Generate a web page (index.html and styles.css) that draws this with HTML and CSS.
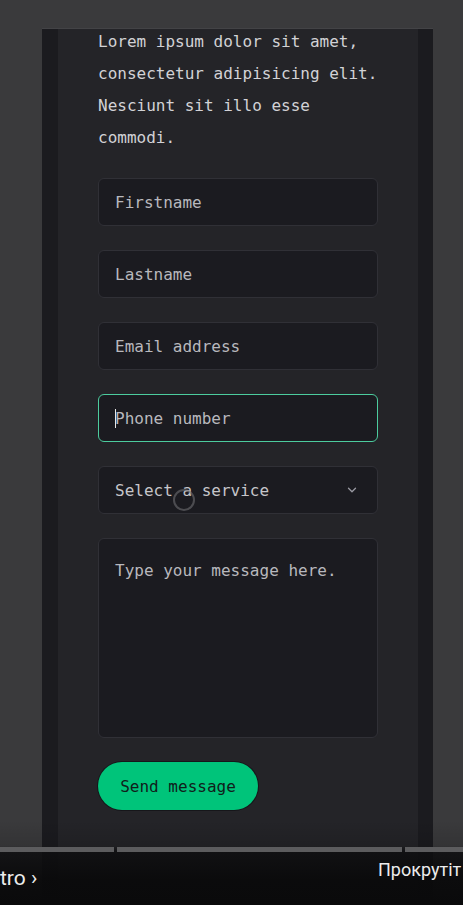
FILE: index.html
```html
<!DOCTYPE html>
<html lang="en">
<head>
<meta charset="utf-8">
<title>Contact form</title>
<link rel="stylesheet" href="styles.css">
</head>
<body>
<div class="stage">
  <div class="device">
    <div class="screen">
      <p class="intro">Lorem ipsum dolor sit amet, consectetur adipisicing elit. Nesciunt sit illo esse commodi.</p>
      <form class="form">
        <div class="field"><span class="ph">Firstname</span></div>
        <div class="field"><span class="ph">Lastname</span></div>
        <div class="field"><span class="ph">Email address</span></div>
        <div class="field is-focused"><span class="caret"></span><span class="ph">Phone number</span></div>
        <div class="field select">
          <span class="ph">Select a service</span>
          <svg class="chevron" width="10" height="6" viewBox="0 0 10 6"><path d="M1.5 1.2l3.5 3.5 3.5-3.5" fill="none" stroke="#9a9aa2" stroke-width="1.3" stroke-linecap="round" stroke-linejoin="round"/></svg>
        </div>
        <div class="field area"><span class="ph">Type your message here.</span></div>
        <div class="btn">Send message</div>
      </form>
    </div>
  </div>
</div>
<div class="spinner"></div>
<div class="player">
  <div class="bar">
    <span class="seg s1"></span>
    <span class="seg s2"></span>
    <span class="seg s3"></span>
  </div>
  <div class="labels">
    <span class="chapter">tro ›</span>
    <span class="hint">Прокрутіт</span>
  </div>
</div>
</body>
</html>
```
FILE: styles.css
```css
html, body {
  margin: 0;
  padding: 0;
}
body {
  width: 463px;
  height: 905px;
  overflow: hidden;
  background: #3a3a3c;
  position: relative;
  font-family: "DejaVu Sans Mono", "Liberation Mono", monospace;
}
.stage {
  padding-top: 29px;
  height: 876px;
}
.device {
  margin-left: 42px;
  width: 391px;
  height: 876px;
  box-sizing: border-box;
  background: #1b1b1f;
  padding: 0 15px 0 16px;
  box-shadow: 0 -1px 0 #434346;
}
.screen {
  background: #242428;
  height: 100%;
  padding: 0 40px;
  overflow: hidden;
}
.intro {
  margin: -3px 0 24px;
  font-size: 16px;
  line-height: 32px;
  color: #d2d2d6;
}
.form {
  display: flex;
  flex-direction: column;
  gap: 24px;
}
.field {
  position: relative;
  height: 48px;
  box-sizing: border-box;
  border: 1px solid #303036;
  border-radius: 6px;
  background: #1b1b20;
  padding: 0 16px;
  display: flex;
  align-items: center;
  font-size: 16px;
  color: #b8b8bd;
}
.field.is-focused {
  border-color: #4ccc9e;
}
.caret {
  position: absolute;
  left: 16px;
  top: 14px;
  width: 1px;
  height: 19px;
  background: #e6e6e6;
}
.select {
  justify-content: space-between;
  padding-right: 20px;
  color: #c6c6ca;
}
.area {
  height: 200px;
  align-items: flex-start;
  padding-top: 20px;
  line-height: 24px;
}
.btn {
  width: 160px;
  height: 48px;
  border-radius: 24px;
  background: #00c47a;
  color: #10201a;
  font-size: 16px;
  display: flex;
  align-items: center;
  justify-content: center;
  box-shadow: 0 0 0 1px #16161a;
}
.spinner {
  position: absolute;
  left: 173px;
  top: 489px;
  width: 18px;
  height: 18px;
  border: 2px solid rgba(110, 110, 114, 0.6);
  border-radius: 50%;
}
.player {
  position: absolute;
  left: 0;
  right: 0;
  bottom: 0;
  height: 85px;
  overflow: hidden;
  background: linear-gradient(to bottom, rgba(0,0,0,0) 0, rgba(0,0,0,0.12) 26px, rgba(14,14,16,0.88) 32px, rgba(10,10,11,0.96) 60px, #0a0a0b 100%);
}
.bar {
  display: flex;
  gap: 3px;
  margin-top: 27px;
  height: 5px;
}
.seg {
  background: #5c5c5e;
  height: 5px;
}
.s1 { flex: 0 0 114px; }
.s2 { flex: 0 0 285px; }
.s3 { flex: 1 1 auto; }
.labels {
  display: flex;
  white-space: nowrap;
  font-family: Roboto, "Liberation Sans", sans-serif;
  color: #ececec;
}
.chapter {
  flex: 0 0 378px;
  font-size: 21px;
  line-height: 24px;
  margin-top: 14px;
}
.hint {
  flex: 0 0 auto;
  font-size: 18px;
  line-height: 24px;
  margin-top: 6px;
}
```
